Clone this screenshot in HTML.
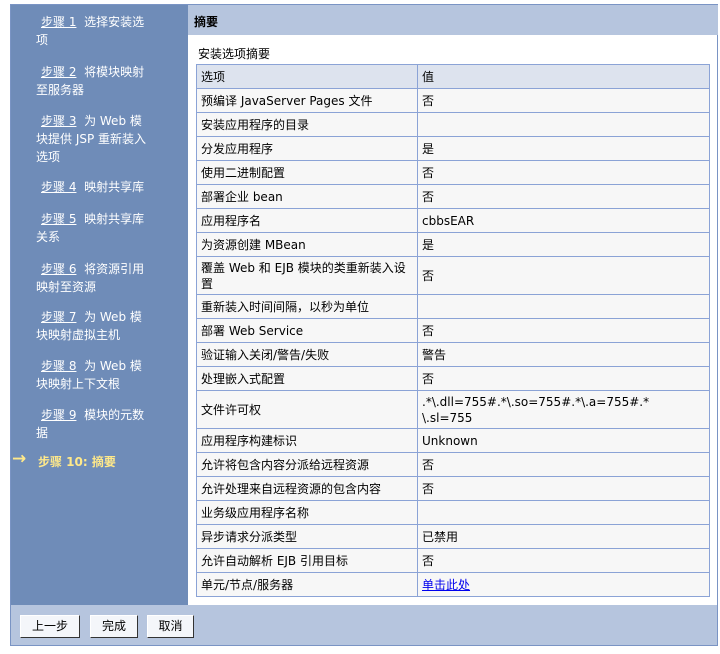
<!DOCTYPE html>
<html><head><meta charset="utf-8"><style>
*{margin:0;padding:0;box-sizing:border-box}
body{width:720px;height:654px;background:#fff;font-family:"DejaVu Sans","Noto Sans CJK SC",sans-serif;font-size:12px;color:#000;position:relative;overflow:hidden}
#frame{position:absolute;left:10px;top:4px;width:708px;height:642px;border:1px solid #7a94c4;background:#fff}
#nav{position:absolute;left:0;top:0;width:177px;height:600px;background:#6f8cb8;color:#fff}
.st{position:absolute;left:0;width:141px;line-height:18px;padding-left:25px;text-indent:5px;word-break:break-all}
.st a{color:#fff;text-decoration:underline}
#cur{position:absolute;left:0;top:449px;color:#ffe98a;font-weight:bold;line-height:16px}
#hdr{position:absolute;left:177px;top:0;width:530px;height:30px;background:#b6c5de;font-weight:bold;padding:8px 0 0 6px}
#cap{position:absolute;left:187px;top:40px}
table{position:absolute;left:185px;top:59px;width:514px;border-collapse:collapse;border:1px solid #8ba3d6}
td{border:1px solid #8ba3d6;background:#f7f7f7;padding:0 4px;height:24px;line-height:16px;vertical-align:middle;word-break:break-all}
td.a{width:221px;word-break:normal}
tr.h td{background:#dde3ee}
#bot{position:absolute;left:0;top:600px;width:706px;height:40px;background:#b6c5de}
.btn{position:absolute;top:10px;height:23px;background:#f4f6fa;border:1px solid #fff;border-right:1px solid #333;border-bottom:1px solid #333;text-align:center;line-height:20px}
a.l{color:#00e;text-decoration:underline}
</style></head><body>
<div id="frame">
<div id="nav">
<div class="st" style="top:8px"><a>步骤 1</a>&nbsp; 选择安装选项</div>
<div class="st" style="top:58px"><a>步骤 2</a>&nbsp; 将模块映射至服务器</div>
<div class="st" style="top:107px"><a>步骤 3</a>&nbsp; 为 Web 模块提供 JSP 重新装入选项</div>
<div class="st" style="top:173px"><a>步骤 4</a>&nbsp; 映射共享库</div>
<div class="st" style="top:205px"><a>步骤 5</a>&nbsp; 映射共享库关系</div>
<div class="st" style="top:255px"><a>步骤 6</a>&nbsp; 将资源引用映射至资源</div>
<div class="st" style="top:303px"><a>步骤 7</a>&nbsp; 为 Web 模块映射虚拟主机</div>
<div class="st" style="top:352px"><a>步骤 8</a>&nbsp; 为 Web 模块映射上下文根</div>
<div class="st" style="top:401px"><a>步骤 9</a>&nbsp; 模块的元数据</div>
<div id="cur"><span style="position:absolute;left:1px;top:-3px;font-size:17px">→</span><span style="position:absolute;left:27px;white-space:nowrap">步骤 10: 摘要</span></div>
</div>
<div id="hdr">摘要</div>
<div id="cap">安装选项摘要</div>
<table>
<tr class="h"><td class="a">选项</td><td>值</td></tr>
<tr><td class="a">预编译 JavaServer Pages 文件</td><td>否</td></tr>
<tr><td class="a">安装应用程序的目录</td><td></td></tr>
<tr><td class="a">分发应用程序</td><td>是</td></tr>
<tr><td class="a">使用二进制配置</td><td>否</td></tr>
<tr><td class="a">部署企业 bean</td><td>否</td></tr>
<tr><td class="a">应用程序名</td><td>cbbsEAR</td></tr>
<tr><td class="a">为资源创建 MBean</td><td>是</td></tr>
<tr><td class="a" style="height:38px">覆盖 Web 和 EJB 模块的类重新装入设置</td><td>否</td></tr>
<tr><td class="a">重新装入时间间隔，以秒为单位</td><td></td></tr>
<tr><td class="a">部署 Web Service</td><td>否</td></tr>
<tr><td class="a">验证输入关闭/警告/失败</td><td>警告</td></tr>
<tr><td class="a">处理嵌入式配置</td><td>否</td></tr>
<tr><td class="a" style="height:38px">文件许可权</td><td>.*\.dll=755#.*\.so=755#.*\.a=755#.*<br>\.sl=755</td></tr>
<tr><td class="a">应用程序构建标识</td><td>Unknown</td></tr>
<tr><td class="a">允许将包含内容分派给远程资源</td><td>否</td></tr>
<tr><td class="a">允许处理来自远程资源的包含内容</td><td>否</td></tr>
<tr><td class="a">业务级应用程序名称</td><td></td></tr>
<tr><td class="a">异步请求分派类型</td><td>已禁用</td></tr>
<tr><td class="a">允许自动解析 EJB 引用目标</td><td>否</td></tr>
<tr><td class="a">单元/节点/服务器</td><td><a class="l">单击此处</a></td></tr>
</table>
<div id="bot">
<div class="btn" style="left:9px;width:60px">上一步</div>
<div class="btn" style="left:79px;width:48px">完成</div>
<div class="btn" style="left:136px;width:47px">取消</div>
</div>
</div>
</body></html>
